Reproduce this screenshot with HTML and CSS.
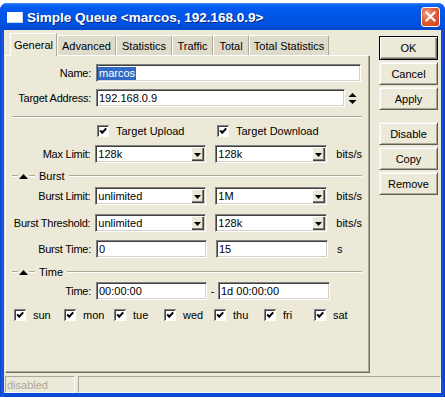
FILE: index.html
```html
<!DOCTYPE html>
<html>
<head>
<meta charset="utf-8">
<title>Simple Queue</title>
<link rel="stylesheet" href="styles.css">
</head>
<body>
<svg class="defs" width="0" height="0">
  <symbol id="chk" viewBox="0 0 12 12">
    <rect x="0" y="0" width="12" height="12" fill="#808080"/>
    <rect x="1" y="1" width="11" height="11" fill="#fff"/>
    <rect x="1" y="1" width="10" height="1" fill="#404040"/>
    <rect x="1" y="1" width="1" height="10" fill="#404040"/>
    <rect x="2" y="2" width="9" height="9" fill="#fff"/>
    <path d="M3.2 5.4 L5.2 7.6 L9.2 3.4" stroke="#000" stroke-width="2.1" fill="none"/>
  </symbol>
  <symbol id="dd" viewBox="0 0 7 4">
    <polygon points="0,0 7,0 3.5,4" fill="#000"/>
  </symbol>
</svg>
<div class="window">
  <div class="titlebar">
    <svg class="appicon" width="16" height="11" viewBox="0 0 16 11"><rect x="0" y="0" width="16" height="11" fill="#fff"/><rect x="0" y="10" width="16" height="1" fill="#c9d6ee"/><rect x="15" y="0" width="1" height="11" fill="#c9d6ee"/></svg>
    <span class="title">Simple Queue &lt;marcos, 192.168.0.9&gt;</span>
    <div class="close"><svg width="11" height="11" viewBox="0 0 11 11"><path d="M1.5 1.5 L9.5 9.5 M9.5 1.5 L1.5 9.5" stroke="#fff" stroke-width="2.2" stroke-linecap="square"/></svg></div>
  </div>
  <div class="client">
    <div class="main">
      <div class="tabarea">
        <div class="tabs">
          <div class="tab active t-general">General</div>
          <div class="tab t-advanced">Advanced</div>
          <div class="tab t-statistics">Statistics</div>
          <div class="tab t-traffic">Traffic</div>
          <div class="tab t-total">Total</div>
          <div class="tab t-totalstat">Total Statistics</div>
        </div>
        <div class="panel">
          <div class="row">
            <span class="lbl">Name:</span>
            <div class="fld w-name"><span class="sel">marcos</span></div>
          </div>
          <div class="row r-addr">
            <span class="lbl">Target Address:</span>
            <div class="fld w-addr">192.168.0.9</div>
            <svg class="spin" width="9" height="13" viewBox="0 0 9 13"><polygon points="0.5,5 4.5,1 8.5,5" fill="#000"/><polygon points="0.5,8 4.5,12 8.5,8" fill="#000"/></svg>
          </div>
          <div class="sep"></div>
          <div class="row r-checks">
            <span class="spacer"></span>
            <label class="chkitem ci-up"><svg class="cb"><use href="#chk"/></svg><span>Target Upload</span></label>
            <label class="chkitem"><svg class="cb"><use href="#chk"/></svg><span>Target Download</span></label>
          </div>
          <div class="row r-max">
            <span class="lbl">Max Limit:</span>
            <div class="fld combo w-c1">128k<span class="ddb"><svg width="7" height="4"><use href="#dd"/></svg></span></div>
            <div class="fld combo w-c2">128k<span class="ddb"><svg width="7" height="4"><use href="#dd"/></svg></span></div>
            <span class="unit">bits/s</span>
          </div>
          <div class="hdr h-burst">
            <span class="hl short"></span>
            <svg class="tri" width="9" height="5" viewBox="0 0 9 5"><polygon points="0,5 4.5,0 9,5" fill="#000"/></svg>
            <span class="hl short"></span>
            <span class="htext">Burst</span>
            <span class="hl long"></span>
          </div>
          <div class="row r-bl">
            <span class="lbl">Burst Limit:</span>
            <div class="fld combo w-c1">unlimited<span class="ddb"><svg width="7" height="4"><use href="#dd"/></svg></span></div>
            <div class="fld combo w-c2">1M<span class="ddb"><svg width="7" height="4"><use href="#dd"/></svg></span></div>
            <span class="unit">bits/s</span>
          </div>
          <div class="row r-bt">
            <span class="lbl">Burst Threshold:</span>
            <div class="fld combo w-c1">unlimited<span class="ddb"><svg width="7" height="4"><use href="#dd"/></svg></span></div>
            <div class="fld combo w-c2">128k<span class="ddb"><svg width="7" height="4"><use href="#dd"/></svg></span></div>
            <span class="unit">bits/s</span>
          </div>
          <div class="row r-btime">
            <span class="lbl">Burst Time:</span>
            <div class="fld w-c1">0</div>
            <div class="fld w-c2">15</div>
            <span class="unit">s</span>
          </div>
          <div class="hdr h-time">
            <span class="hl short"></span>
            <svg class="tri" width="9" height="5" viewBox="0 0 9 5"><polygon points="0,5 4.5,0 9,5" fill="#000"/></svg>
            <span class="hl short"></span>
            <span class="htext">Time</span>
            <span class="hl long"></span>
          </div>
          <div class="row r-time">
            <span class="lbl">Time:</span>
            <div class="fld w-c1">00:00:00</div>
            <span class="dash">-</span>
            <div class="fld w-t2">1d 00:00:00</div>
          </div>
          <div class="days">
            <label class="day"><svg class="cb"><use href="#chk"/></svg><span>sun</span></label>
            <label class="day"><svg class="cb"><use href="#chk"/></svg><span>mon</span></label>
            <label class="day"><svg class="cb"><use href="#chk"/></svg><span>tue</span></label>
            <label class="day"><svg class="cb"><use href="#chk"/></svg><span>wed</span></label>
            <label class="day"><svg class="cb"><use href="#chk"/></svg><span>thu</span></label>
            <label class="day"><svg class="cb"><use href="#chk"/></svg><span>fri</span></label>
            <label class="day"><svg class="cb"><use href="#chk"/></svg><span>sat</span></label>
          </div>
        </div>
      </div>
      <div class="buttons">
        <div class="btn default">OK</div>
        <div class="btn">Cancel</div>
        <div class="btn">Apply</div>
        <div class="btn gap">Disable</div>
        <div class="btn">Copy</div>
        <div class="btn">Remove</div>
      </div>
    </div>
    <div class="statusbar">
      <div class="sbf sb-first">disabled</div>
      <div class="sbf sb-rest"></div>
    </div>
  </div>
</div>
</body>
</html>
```

FILE: styles.css
```css
* { box-sizing: border-box; }

html, body {
  margin: 0;
  padding: 0;
}

body {
  width: 445px;
  height: 400px;
  overflow: hidden;
  background: #ffffff;
  font-family: "Liberation Sans", Arial, sans-serif;
  font-size: 11px;
  color: #000;
}

.defs { position: absolute; width: 0; height: 0; }

.window {
  margin-top: 3px;
  width: 445px;
  height: 394px;
  background: linear-gradient(to right, #0842c8 0, #1c5ae6 2px, #0a4ad9 4px, #0a4ad9 441px, #1552dc 443px, #0639b8 445px);
  border-radius: 7px 7px 0 0;
  padding-bottom: 4px;
  display: flex;
  flex-direction: column;
}

.titlebar {
  height: 27px;
  flex: none;
  display: flex;
  align-items: center;
  padding: 2px 5px 0 7px;
  border-radius: 7px 7px 0 0;
  background: linear-gradient(to bottom, #3d8ef8 0, #0b63f2 2px, #0259ef 6px, #0055e6 50%, #0051df 80%, #0346cc 100%);
}

.appicon { flex: none; margin-right: 4px; }

.title {
  flex: 1;
  color: #fff;
  font-weight: bold;
  font-size: 13.5px;
  text-shadow: 1px 1px #0b2a8a;
  white-space: nowrap;
}

.close {
  flex: none;
  width: 19px;
  height: 20px;
  margin-top: -2px;
  border: 1px solid #fff;
  border-radius: 3px;
  background: radial-gradient(circle at 30% 30%, #f49a80 0, #e45c35 45%, #c9401c 100%);
  display: flex;
  align-items: center;
  justify-content: center;
}

.client {
  flex: 1;
  margin: 0 4px;
  background: #ece9d8;
  display: flex;
  flex-direction: column;
}

.main {
  height: 343px;
  display: flex;
  padding-top: 3px;
}

.tabarea {
  margin-left: 1px;
  width: 365px;
  display: flex;
  flex-direction: column;
}

.tabs {
  height: 22px;
  display: flex;
  align-items: flex-end;
  padding-left: 5px;
  position: relative;
  z-index: 1;
}

.tab {
  height: 20px;
  display: flex;
  align-items: center;
  justify-content: center;
  background: #dedbcb;
  border-top: 1px solid #fff;
  border-left: 1px solid #fff;
  border-right: 1px solid #aca899;
  white-space: nowrap;
  padding-top: 1px;
}

.tab.active {
  height: 23px;
  margin-bottom: -1px;
  background: #ece9d8;
  padding-top: 0;
  padding-bottom: 1px;
}

.t-general { width: 47px; }
.t-advanced { width: 59px; }
.t-statistics { width: 56px; }
.t-traffic { width: 41px; }
.t-total { width: 36px; }
.t-totalstat { width: 80px; }

.panel {
  height: 318px;
  border: 1px solid;
  border-color: #fff #716f64 #716f64 #fff;
  box-shadow: inset -1px -1px #aca899;
  padding: 8px 7px 0 0;
  display: flex;
  flex-direction: column;
}

.row {
  display: flex;
  align-items: center;
  height: 18px;
  flex: none;
}

.lbl {
  width: 85px;
  margin-right: 5px;
  text-align: right;
  white-space: nowrap;
  letter-spacing: -0.25px;
}

.fld {
  height: 18px;
  background: #fff;
  border: 1px solid;
  border-color: #808080 #fff #fff #808080;
  box-shadow: inset 1px 1px #404040, inset -1px -1px #d4d0c8;
  padding: 0 1px 0 2px;
  display: flex;
  align-items: center;
  white-space: nowrap;
  flex: none;
}

.sel {
  background: #316ac5;
  color: #fff;
  padding: 0 1px;
  margin-left: -1px;
  line-height: 13px;
}

.w-name { width: 265px; }
.w-addr { width: 249px; }
.w-c1 { width: 111px; }
.w-c2 { width: 112px; margin-left: 9px; }
.w-t2 { width: 112px; }

.spin { margin-left: 3px; flex: none; }

.combo { padding-right: 1px; }

.ddb {
  margin-left: auto;
  width: 13px;
  height: 14px;
  background: #ece9d8;
  box-shadow: inset 1px 1px #fff, inset -1px -1px #404040, inset -2px -2px #808080;
  display: flex;
  align-items: center;
  justify-content: center;
  padding-top: 1px;
}

.unit { margin-left: 9px; }

.dash { width: 11px; text-align: center; }

.r-addr { margin-top: 7px; }

.sep {
  flex: none;
  margin: 9px 0 0 6px;
  height: 2px;
  border-top: 1px solid #aca899;
  border-bottom: 1px solid #fff;
}

.r-checks { margin-top: 6px; height: 14px; }
.spacer { width: 91px; flex: none; }

.chkitem, .day {
  display: flex;
  align-items: center;
  white-space: nowrap;
}

.ci-up { width: 120px; }

.cb { width: 12px; height: 12px; flex: none; margin-right: 7px; }

.r-max { margin-top: 7px; }

.hdr {
  flex: none;
  display: flex;
  align-items: center;
  height: 12px;
  padding-left: 6px;
}

.h-burst { margin-top: 7px; }
.h-time { margin-top: 8px; }

.hl {
  height: 2px;
  border-top: 1px solid #aca899;
  border-bottom: 1px solid #fff;
}

.hl.short { width: 6px; }
.tri { margin: 0 1px; flex: none; }
.htext { margin: 0 4px; }
.hl.long { flex: 1; }

.r-bl { margin-top: 5px; }
.r-bt { margin-top: 9px; }
.r-btime { margin-top: 8px; }
.r-time { margin-top: 4px; }

.days {
  margin-top: 8px;
  padding-left: 8px;
  display: grid;
  grid-template-columns: repeat(7, 50px);
  height: 14px;
}

.buttons {
  margin-left: 9px;
  margin-top: 3px;
  width: 59px;
  display: flex;
  flex-direction: column;
  gap: 2px;
}

.btn {
  height: 23px;
  display: flex;
  align-items: center;
  justify-content: center;
  border: 1px solid;
  border-color: #f4f3ee #5e5c53 #5e5c53 #f4f3ee;
  box-shadow: inset 1px 1px #fff, inset -1px -1px #aca899;
  background: #ece9d8;
}

.btn.default {
  height: 24px;
  border: 1px solid #000;
  box-shadow: inset 1px 1px #fff, inset -1px -1px #716f64, inset -2px -2px #aca899;
  margin-bottom: 0;
}

.btn.gap { margin-top: 10px; }

.statusbar {
  margin-top: 3px;
  height: 17px;
  display: flex;
  gap: 3px;
}

.sbf {
  height: 17px;
  border: 1px solid;
  border-color: #aca899 #fff #fff #aca899;
  display: flex;
  align-items: center;
  padding-left: 1px;
  color: #aca899;
}

.sb-first { margin-left: 1px; width: 70px; }
.sb-rest { flex: 1; }
```
